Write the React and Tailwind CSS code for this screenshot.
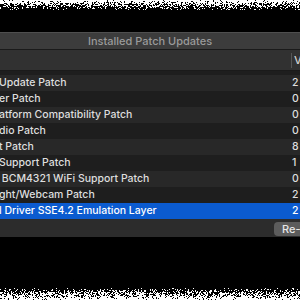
const rows = [
  { name: "ater", value: "1", tone: "dark" },
  { name: "Update Patch", value: "2", tone: "light" },
  { name: "er Patch", value: "0", tone: "dark" },
  { name: "atform Compatibility Patch", value: "0", tone: "light" },
  { name: "dio Patch", value: "0", tone: "dark" },
  { name: "t Patch", value: "8", tone: "light" },
  { name: "Support Patch", value: "1", tone: "dark" },
  { name: " BCM4321 WiFi Support Patch", value: "0", tone: "light" },
  { name: "ght/Webcam Patch", value: "2", tone: "dark" },
  { name: "l Driver SSE4.2 Emulation Layer", value: "2", tone: "selected" },
];

// torn-edge speckle, deterministic
function speckle(height, seed, fromTop) {
  let s = seed;
  const rand = () => {
    s = (s * 1103515245 + 12345) & 0x7fffffff;
    return s / 0x7fffffff;
  };
  let d = "";
  for (let y = 0; y < height; y++) {
    const t = fromTop ? y / height : (height - 1 - y) / height;
    const p = 0.95 - t * 1.05;
    for (let x = 0; x < 300; x++) {
      if (rand() < p) d += `M${x} ${y}h1v1h-1z`;
    }
  }
  return d;
}

function Noise({ height, top, seed }) {
  return (
    <svg width="300" height={height} className="block shrink-0" viewBox={`0 0 300 ${height}`}>
      <path d={speckle(height, seed, top)} fill="#fff" />
    </svg>
  );
}

function Row({ row }) {
  const bg =
    row.tone === "selected"
      ? "bg-[#0b5bd0] text-white"
      : row.tone === "light"
      ? "bg-[#282828] text-[#dedede]"
      : "bg-[#1e1e1e] text-[#dedede]";
  return (
    <div className={`flex h-[16px] items-center leading-none ${bg}`}>
      <span className="flex-1 whitespace-pre overflow-hidden -ml-[1px] pt-[1px]">{row.name}</span>
      <span className="w-[8px] pt-[1px]">{row.value}</span>
    </div>
  );
}

export default function App() {
  return (
    <div
      className="w-[300px] h-[300px] bg-black flex flex-col overflow-hidden"
      style={{ fontFamily: "Inter, 'Liberation Sans', sans-serif" }}
    >
      <Noise height={11} top seed={7} />
      <div className="h-[21px] shrink-0" />

      <div className="flex flex-col shrink-0">
        <div className="h-[18px] bg-[#3c3c3c] border-t border-[#4f4f4f] border-b border-b-[#1a1a1a] flex items-center justify-center text-[11px] font-medium text-[#9a9a9a]">
          Installed Patch Updates
        </div>
        <div className="h-[21px] bg-[#313131] border-b border-[#1a1a1a] flex items-center justify-end text-[11px] font-medium text-[#cfcfcf]">
          <div className="w-px h-[15px] bg-[#555] mr-[2px]" />
          <span className="w-[6px] overflow-hidden">V</span>
        </div>
        <div className="h-[148px] overflow-hidden text-[10.5px] font-medium">
          <div className="-mt-[12px]">
            {rows.map((r, i) => (
              <Row key={i} row={r} />
            ))}
          </div>
        </div>
        <div className="h-[18px] bg-[#2c2c2c] flex items-start justify-end pt-[3px]">
          <div className="w-[26px] h-[14px] rounded-l-[4px] bg-[#5c5c5c] text-[11px] font-medium leading-[14px] text-[#e6e6e6] pl-[8px] overflow-hidden whitespace-nowrap">
            Re-Install
          </div>
        </div>
      </div>

      <div className="flex-1" />
      <Noise height={13} top={false} seed={31} />
    </div>
  );
}
